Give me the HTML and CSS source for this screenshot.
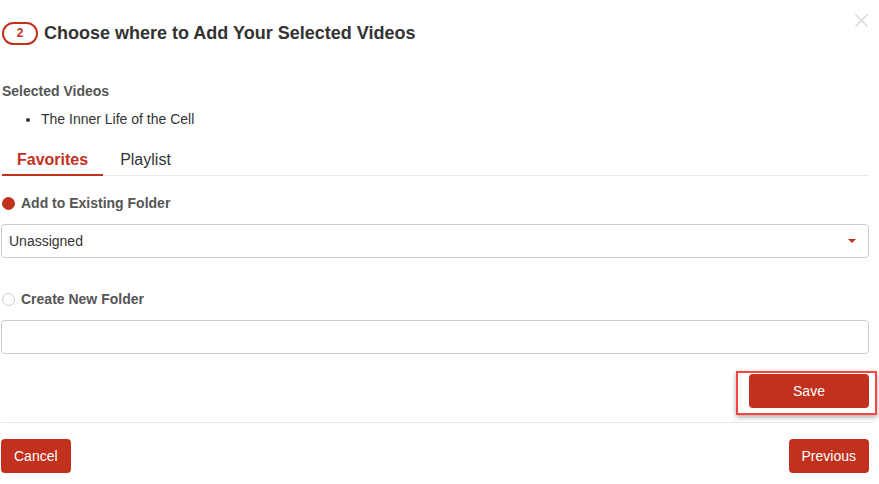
FILE: index.html
```html
<!DOCTYPE html>
<html>
<head>
<meta charset="utf-8">
<link rel="stylesheet" href="styles.css">
</head>
<body>
<div class="modal">
  <div class="header">
    <span class="step">2</span>
    <h1 class="title">Choose where to Add Your Selected Videos</h1>
    <span class="close"><svg width="13" height="13" viewBox="0 0 13 13"><path d="M0.5 0.5 L12.5 12.5 M12.5 0.5 L0.5 12.5" stroke="#d4d4d4" stroke-width="1.3" fill="none"/></svg></span>
  </div>
  <div class="selected-label">Selected Videos</div>
  <ul class="video-list"><li>The Inner Life of the Cell</li></ul>
  <div class="tabs">
    <div class="tab active">Favorites</div>
    <div class="tab">Playlist</div>
  </div>
  <div class="radio-row first"><span class="radio checked"></span><span class="radio-label">Add to Existing Folder</span></div>
  <div class="select"><span>Unassigned</span><span class="caret"></span></div>
  <div class="radio-row second"><span class="radio"></span><span class="radio-label">Create New Folder</span></div>
  <div class="text-input"></div>
  <div class="save-row"><button class="btn save">Save</button></div>
  <div class="footer">
    <button class="btn">Cancel</button>
    <button class="btn">Previous</button>
  </div>
</div>
</body>
</html>
```
FILE: styles.css
```css
html, body { margin: 0; padding: 0; background: #fff; }
body { font-family: "Liberation Sans", Arial, sans-serif; color: #333; }
.modal { padding: 22px 10px 0 1px; }
.header { display: flex; align-items: center; height: 22px; }
.step {
  box-sizing: border-box; width: 36px; height: 23px; margin-left: 1px;
  border: 2px solid #c1311d; border-radius: 12px;
  color: #c1311d; font-size: 12px; font-weight: bold;
  display: flex; align-items: center; justify-content: center;
}
.title { margin: 0 0 0 6px; font-size: 18px; line-height: 22px; font-weight: bold; color: #333; flex: 1; }
.close { align-self: flex-start; margin-top: -9px; margin-right: 1px; height: 13px; }
.selected-label { margin: 39px 0 0 1px; font-size: 14px; line-height: 16px; font-weight: bold; color: #555; }
.video-list { margin: 12px 0 0; padding-left: 40px; font-size: 14px; line-height: 16px; color: #333; }
.tabs { margin-top: 18px; display: flex; border-bottom: 1px solid #eaeaea; }
.tab { padding: 7px 15px 6px; font-size: 16px; line-height: 16px; color: #333; border-bottom: 2px solid transparent; margin-bottom: -1px; margin-right: 2px; }
.tab.active { color: #c1311d; font-weight: bold; border-bottom-color: #c1311d; margin-left: 1px; }
.radio-row { display: flex; align-items: center; height: 16px; margin-left: 1px; }
.radio-row.first { margin-top: 19px; }
.radio-row.second { margin-top: 33px; }
.radio { box-sizing: border-box; width: 13px; height: 13px; border-radius: 50%; border: 1px solid #ccc; background: #fff; }
.radio.checked { background: #c1311d; border-color: #c1311d; }
.radio-label { margin-left: 6px; font-size: 14px; font-weight: bold; color: #555; }
.select, .text-input {
  box-sizing: border-box; height: 34px; margin-top: 13px;
  border: 1px solid #ccc; border-radius: 4px;
}
.select { display: flex; align-items: center; justify-content: space-between; padding: 0 12px 0 7px; font-size: 14px; color: #333; }
.caret { width: 0; height: 0; border-left: 4px solid transparent; border-right: 4px solid transparent; border-top: 4px solid #c1311d; }
.save-row { display: flex; justify-content: flex-end; margin-top: 20px; }
.btn {
  box-sizing: border-box; height: 34px; padding: 0 13px;
  background: #c1311d; color: #fff; border: none; border-radius: 4px;
  font-family: "Liberation Sans", Arial, sans-serif; font-size: 14px;
}
.btn.save { width: 120px; position: relative; }
.btn.save::after {
  content: ""; position: absolute; left: -13px; top: -3px; right: -8px; bottom: -7px;
  border: 2px solid #ff4444; box-shadow: 0 2px 5px rgba(0,0,0,0.35);
}
.footer { margin: 14px -4px 0 0; padding: 16px 4px 0 0; border-top: 1px solid #e8e8e8; display: flex; justify-content: space-between; }
```
